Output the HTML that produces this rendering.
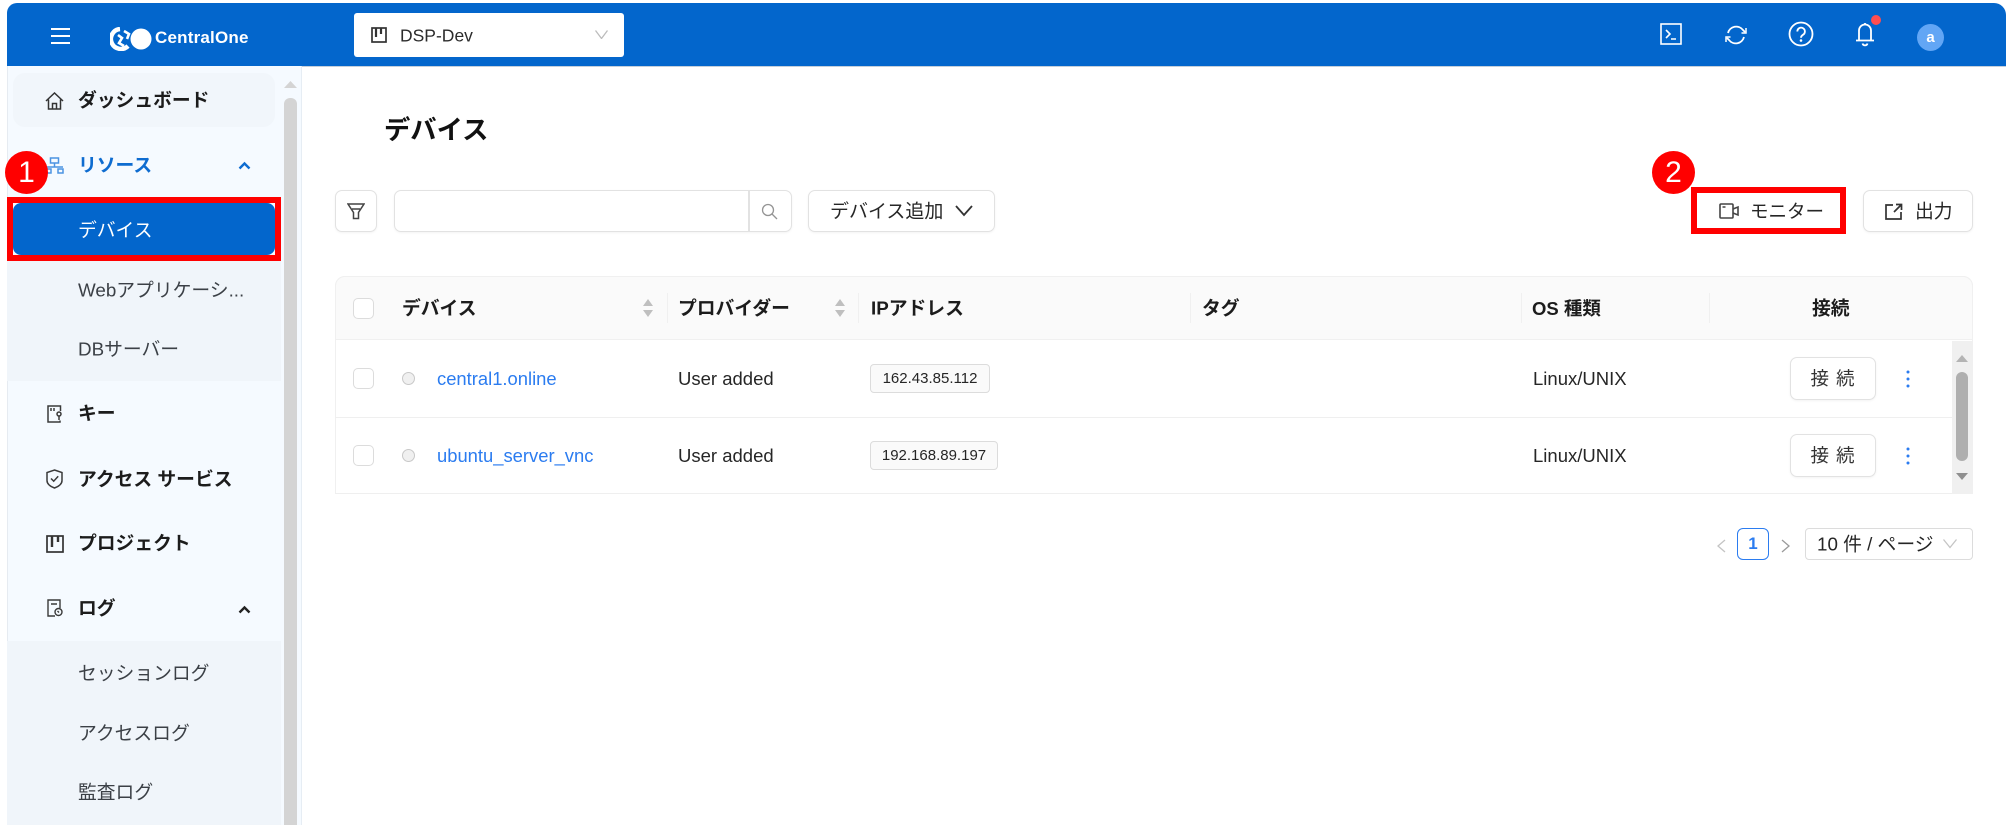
<!DOCTYPE html>
<html lang="ja"><head><meta charset="utf-8"><title>デバイス</title>
<style>
*{box-sizing:border-box}
html,body{margin:0;padding:0;background:#fff}
body{width:2006px;height:825px;position:relative;overflow:hidden;font-family:"Liberation Sans","Noto Sans CJK JP",sans-serif;color:#262626}
.a{position:absolute}
.t{position:absolute;white-space:nowrap;transform:translateY(-50%);line-height:1.2;font-size:18.8px;margin-top:.5px}
.m{margin-top:1.5px}
.b{font-weight:700;color:#1c1c1c}
.s{color:#3b4046}
.l{font-size:18.500px;margin-top:-.5px}
.btn{position:absolute;background:#fff;border:1.5px solid #e2e2e2;border-radius:7px;box-shadow:0 1px 2px rgba(0,0,0,.05)}
.cb{position:absolute;width:21px;height:21px;background:#fff;border:1.5px solid #dcdcdc;border-radius:5px}
.dv{position:absolute;width:1px;top:293px;height:30px;background:#f0f0f0}
.tag{position:absolute;height:29px;left:870px;background:#fafafa;border:1.5px solid #dcdcdc;border-radius:4px;font-size:15px;line-height:28px;text-align:center;color:#262626}
svg{position:absolute;display:block;fill:none}
.link{color:#2b7cf0;font-size:18.400px;margin-top:-.5px}
.c{position:absolute;width:43px;height:43px;border-radius:50%;background:#f00;color:#fff;font-size:30px;line-height:43px;text-align:center;font-family:"Liberation Sans",sans-serif}
.rb{position:absolute;border:6px solid #f00}
</style></head><body>

<!-- Header -->
<div class="a" style="left:7px;top:3px;width:1999px;height:63px;background:#0366cc;border-radius:10px 12px 0 0;box-shadow:0 1px 0 #c4cfdb"></div>
<svg style="left:51px;top:27px" width="19" height="18" stroke="#fff" stroke-width="2"><path d="M0 2h19M0 9h19M0 16h19"/></svg>
<svg style="left:110px;top:27px" width="42" height="24"><circle cx="31" cy="12" r="10.5" fill="#fff"/><path d="M10 2a10 10 0 1 0 8 17" stroke="#fff" stroke-width="4.5"/><path d="M8 8l4 3-3 5 5 3M14 4l5 3-2 5" stroke="#fff" stroke-width="2.6"/></svg>
<div class="t" style="left:155px;top:37.500px;font-size:17px;font-weight:700;color:#fff;letter-spacing:.2px">CentralOne</div>
<div class="a" style="left:354px;top:13px;width:270px;height:44px;background:#fff;border-radius:3px"></div>
<svg style="left:371px;top:27px" width="16" height="16" stroke="#333" stroke-width="1.7"><rect x="1" y="1" width="14" height="14"/><path d="M5 1v9M10 1v6" stroke-width="2.2"/></svg>
<div class="t" style="left:400px;top:35.500px;font-size:17.5px;color:#2b2b2b">DSP-Dev</div>
<svg style="left:595px;top:30px" width="13" height="9" stroke="#bcbcbc" stroke-width="1.3"><path d="M.5.5l6 8 6-8"/></svg>

<svg style="left:1660px;top:23px" width="22" height="22" stroke="#fff" stroke-width="1.6"><rect x="1" y="1" width="20" height="20"/><path d="M6 7l4 4-4 4M11 16h5"/></svg>
<svg style="left:1725px;top:24px" width="22" height="22" stroke="#fff" stroke-width="1.8"><path d="M3 9a8.5 8.5 0 0 1 15-3l2 2M19 13a8.5 8.5 0 0 1-15 3l-2-2"/><path d="M21 4v5h-4.5M1 18v-5h4.500" stroke-width="1.500"/></svg>
<svg style="left:1788px;top:21px" width="26" height="26" stroke="#fff" stroke-width="1.800"><circle cx="13" cy="13" r="11.500"/><path d="M9.300 10.500a3.800 3.800 0 1 1 5.800 3.200c-1.300.8-2.100 1.500-2.100 3"/><circle cx="13" cy="19.500" r=".6" stroke-width="1.400"/></svg>
<svg style="left:1855px;top:21px" width="20" height="26" stroke="#fff" stroke-width="1.800"><path d="M4 19V9.500a6 6 0 0 1 12 0V19M1 19.500h18"/><path d="M7.500 22.500a2.600 2.600 0 0 0 5 0M10 2V3.500"/></svg>
<div class="a" style="left:1871px;top:15px;width:10px;height:10px;border-radius:50%;background:#ff4d4f"></div>
<div class="a" style="left:1917px;top:24px;width:27px;height:27px;border-radius:50%;background:#62a6f5;color:#fff;font-size:15px;line-height:27px;text-align:center;font-weight:700">a</div>

<!-- Sidebar -->
<div class="a" style="left:7px;top:66px;width:295px;height:759px;background:#f5faff;border-left:1px solid #e6ebf1;border-right:1px solid #e6edf4"></div>
<div class="a" style="left:284px;top:98px;width:13px;height:727px;background:#d4d4d4;border-radius:6px 6px 0 0"></div>
<svg style="left:284px;top:81px" width="13" height="8"><path d="M6.500 0L13 7H0z" fill="#d4d4d4"/></svg>
<div class="a" style="left:13px;top:73px;width:262px;height:54px;background:#f1f6fb;border-radius:12px"></div>
<div class="a" style="left:7px;top:261px;width:274px;height:120px;background:#f0f5fa"></div>
<div class="a" style="left:7px;top:641px;width:274px;height:184px;background:#f0f5fa"></div>
<div class="a" style="left:13px;top:203px;width:262px;height:52px;background:#0366cc;border-radius:8px"></div>

<svg style="left:45px;top:92px" width="19" height="18" stroke="#333" stroke-width="1.500"><path d="M1 9L9.500 1 18 9M3.500 7.500V17h12V7.500M7.500 17v-5.500h4V17"/></svg>
<div class="t b" style="left:78px;top:100px">ダッシュボード</div>
<svg style="left:45px;top:157px" width="19" height="17" stroke="#4b93e2" stroke-width="1.500"><rect x="5.500" y="1" width="8" height="5"/><path d="M1 10h17M9.500 6v4"/><rect x="1" y="12" width="5" height="4"/><rect x="13" y="12" width="5" height="4"/></svg>
<div class="t b" style="left:78px;top:165px;color:#0e6cd0">リソース</div>
<svg style="left:238px;top:161px" width="13" height="9" stroke="#0e6cd0" stroke-width="2.400"><path d="M1.500 7.500L6.500 2.500l5 5"/></svg>
<div class="t" style="left:78px;top:230px;color:#fff">デバイス</div>
<div class="t s" style="left:78px;top:290px">Webアプリケーシ...</div>
<div class="t s" style="left:78px;top:349px">DBサーバー</div>
<svg style="left:47px;top:405px" width="15" height="18" stroke="#3a3a3a" stroke-width="1.500"><path d="M10 1H1v16h9M10 1h3.500v5M13 15.500V17h-3"/><circle cx="12" cy="9" r="2"/><path d="M12 11v4M4 3v3M7 3v3"/></svg>
<div class="t b" style="left:78px;top:413px">キー</div>
<svg style="left:46px;top:469px" width="17" height="20" stroke="#3a3a3a" stroke-width="1.500"><path d="M8.500 1L16 3.500v8c0 3.500-3.500 6-7.500 7.500C4.500 17.500 1 15 1 11.500v-8zM5 9.500l2.700 2.700 4.500-5"/></svg>
<div class="t b" style="left:78px;top:479px">アクセス サービス</div>
<svg style="left:46px;top:535px" width="18" height="18" stroke="#333" stroke-width="1.700"><rect x="1" y="1" width="16" height="16"/><path d="M6 1v11M12 1v6" stroke-width="2.400"/></svg>
<div class="t b" style="left:78px;top:543px">プロジェクト</div>
<svg style="left:47px;top:599px" width="16" height="18" stroke="#3a3a3a" stroke-width="1.400"><path d="M8 17H1V1h12v8M4 5h6" /><circle cx="11.500" cy="13" r="3.500"/><path d="M10.500 12l1.500 1.500"/></svg>
<div class="t b" style="left:78px;top:608px">ログ</div>
<svg style="left:238px;top:605px" width="13" height="9" stroke="#222" stroke-width="2.400"><path d="M1.500 7.500L6.500 2.500l5 5"/></svg>
<div class="t s" style="left:78px;top:673px">セッションログ</div>
<div class="t s" style="left:78px;top:733px">アクセスログ</div>
<div class="t s" style="left:78px;top:792px">監査ログ</div>

<div class="rb" style="left:7px;top:197px;width:274px;height:64px"></div>
<div class="c" style="left:5px;top:151px">1</div>

<!-- Main -->
<div class="t m" style="left:384px;top:129px;font-size:26.300px;font-weight:700;color:#111">デバイス</div>
<div class="btn" style="left:335px;top:190px;width:42px;height:42px"></div>
<svg style="left:347px;top:203px" width="18" height="17" stroke="#444" stroke-width="1.500"><path d="M1 1h16l-5.500 8.500v6h-5v-6zM5 6h8"/></svg>
<div class="btn" style="left:394px;top:190px;width:398px;height:42px"></div>
<div class="a" style="left:748px;top:191px;width:1.500px;height:40px;background:#e2e2e2"></div>
<svg style="left:761px;top:203px" width="17" height="17" stroke="#949494" stroke-width="1.300"><circle cx="7" cy="7" r="5.500"/><path d="M11 11l5 5"/></svg>
<div class="btn" style="left:808px;top:190px;width:187px;height:42px"></div>
<div class="t m" style="left:830px;top:211px;font-size:19px">デバイス追加</div>
<svg style="left:954px;top:204px" width="20" height="13" stroke="#333" stroke-width="1.800"><path d="M2 2l8 9 8-9"/></svg>

<div class="a" style="left:1697px;top:193px;width:143px;height:35px;background:#fff"></div>
<svg style="left:1719px;top:203px" width="20" height="16" stroke="#444" stroke-width="1.600"><rect x="1" y="1" width="13" height="14" rx="1"/><path d="M14 6l5-2v8l-5-2M3.500 4h3"/></svg>
<div class="t" style="left:1750px;top:211px;font-size:18.500px">モニター</div>
<div class="rb" style="left:1691px;top:187px;width:155px;height:47px"></div>
<div class="c" style="left:1652px;top:151px">2</div>
<div class="btn" style="left:1863px;top:190px;width:110px;height:42px"></div>
<svg style="left:1885px;top:203px" width="18" height="17" stroke="#333" stroke-width="1.700"><path d="M8 2H1v14h15V9M9 9l7-7M11 1.500h5.500V7"/></svg>
<div class="t" style="left:1915px;top:211px">出力</div>

<!-- Table -->
<div class="a" style="left:335px;top:276px;width:1638px;height:218px;border:1px solid #f0f0f0;border-radius:10px 10px 0 0"></div>
<div class="a" style="left:335px;top:276px;width:1638px;height:64px;background:#fafafa;border:1px solid #f0f0f0;border-bottom:1.500px solid #f0f0f0;border-radius:10px 10px 0 0"></div>
<div class="a" style="left:335px;top:417px;width:1617px;height:1px;background:#efefef"></div>
<div class="a" style="left:335px;top:493px;width:1638px;height:1px;background:#efefef"></div>
<div class="a" style="left:1952px;top:341px;width:21px;height:153px;background:#f0f0f0"></div>
<div class="a" style="left:1956px;top:372px;width:12px;height:89px;background:#afafaf;border-radius:6px"></div>
<svg style="left:1956px;top:355px" width="12" height="7"><path d="M6 0l6 7H0z" fill="#b4b4b4"/></svg>
<svg style="left:1956px;top:473px" width="12" height="7"><path d="M6 7L12 0H0z" fill="#8f8f8f"/></svg>

<div class="cb" style="left:353px;top:298px"></div>
<div class="t b" style="left:402px;top:308px">デバイス</div>
<svg style="left:642px;top:299px" width="12" height="18"><path d="M6 0l5 7H1z" fill="#bfbfbf"/><path d="M6 18l5-7H1z" fill="#bfbfbf"/></svg>
<div class="dv" style="left:667px"></div>
<div class="t b" style="left:678px;top:308px">プロバイダー</div>
<svg style="left:834px;top:299px" width="12" height="18"><path d="M6 0l5 7H1z" fill="#bfbfbf"/><path d="M6 18l5-7H1z" fill="#bfbfbf"/></svg>
<div class="dv" style="left:858px"></div>
<div class="t b" style="left:871px;top:308px">IPアドレス</div>
<div class="dv" style="left:1190px"></div>
<div class="t b" style="left:1202px;top:308px">タグ</div>
<div class="dv" style="left:1521px"></div>
<div class="t b" style="left:1532px;top:308px;font-size:18.500px">OS 種類</div>
<div class="dv" style="left:1709px"></div>
<div class="t b" style="left:1812px;top:308px">接続</div>

<div class="cb" style="left:353px;top:368px"></div>
<div class="a" style="left:402px;top:372px;width:13px;height:13px;border-radius:50%;background:#f0f0f0;border:1.500px solid #c8c8c8"></div>
<div class="t link" style="left:437px;top:379px">central1.online</div>
<div class="t l" style="left:678px;top:379px">User added</div>
<div class="tag" style="top:364px;width:120px">162.43.85.112</div>
<div class="t l" style="left:1533px;top:379px">Linux/UNIX</div>
<div class="btn" style="left:1790px;top:357px;width:86px;height:43px;text-align:center;line-height:41px;font-size:18.500px;letter-spacing:7px;padding-left:6px;color:#333">接続</div>
<svg style="left:1905px;top:370px" width="6" height="18"><circle cx="3" cy="2" r="1.500" fill="#2b7cf0"/><circle cx="3" cy="9" r="1.500" fill="#2b7cf0"/><circle cx="3" cy="16" r="1.500" fill="#2b7cf0"/></svg>

<div class="cb" style="left:353px;top:445px"></div>
<div class="a" style="left:402px;top:449px;width:13px;height:13px;border-radius:50%;background:#f0f0f0;border:1.500px solid #c8c8c8"></div>
<div class="t link" style="left:437px;top:456px">ubuntu_server_vnc</div>
<div class="t l" style="left:678px;top:456px">User added</div>
<div class="tag" style="top:441px;width:128px">192.168.89.197</div>
<div class="t l" style="left:1533px;top:456px">Linux/UNIX</div>
<div class="btn" style="left:1790px;top:434px;width:86px;height:43px;text-align:center;line-height:41px;font-size:18.500px;letter-spacing:7px;padding-left:6px;color:#333">接続</div>
<svg style="left:1905px;top:447px" width="6" height="18"><circle cx="3" cy="2" r="1.500" fill="#2b7cf0"/><circle cx="3" cy="9" r="1.500" fill="#2b7cf0"/><circle cx="3" cy="16" r="1.500" fill="#2b7cf0"/></svg>

<!-- Pagination -->
<svg style="left:1716px;top:539px" width="10" height="14" stroke="#c4c4c4" stroke-width="1.300"><path d="M9 1L2 7l7 6"/></svg>
<div class="a" style="left:1737px;top:528px;width:32px;height:32px;border:1.500px solid #2b7cf0;border-radius:6px;color:#2b7cf0;font-size:17px;font-weight:700;line-height:29px;text-align:center;background:#fff">1</div>
<svg style="left:1781px;top:539px" width="10" height="14" stroke="#9a9a9a" stroke-width="1.300"><path d="M1 1l7 6-7 6"/></svg>
<div class="a" style="left:1805px;top:528px;width:168px;height:32px;border:1.500px solid #dcdcdc;border-radius:4px;background:#fff"></div>
<div class="t m" style="left:1817px;top:543px">10 件 / ページ</div>
<svg style="left:1943px;top:539px" width="14" height="10" stroke="#c4c4c4" stroke-width="1.300"><path d="M.5.500l6.500 8 6.500-8"/></svg>
</body></html>
